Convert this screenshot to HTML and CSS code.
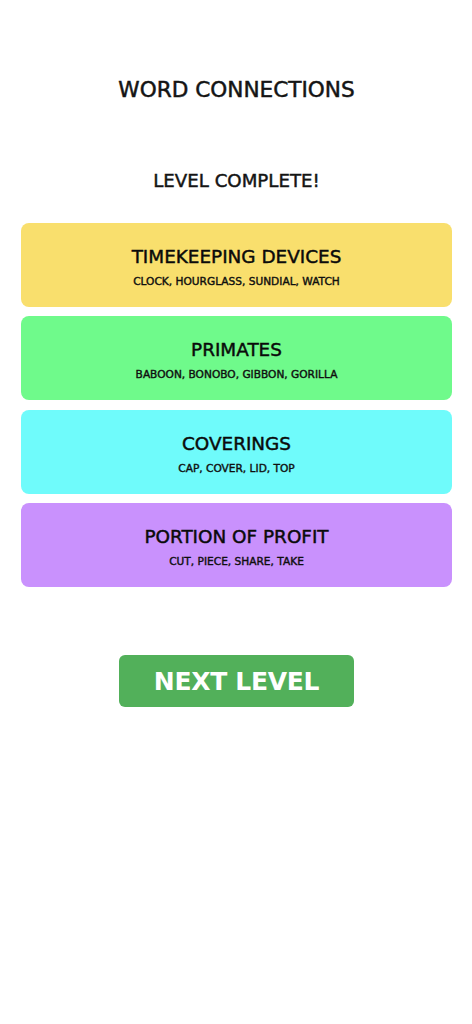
FILE: index.html
```html
<!DOCTYPE html>
<html>
<head>
<meta charset="utf-8">
<link rel="stylesheet" href="styles.css">
</head>
<body>
<main class="page">
  <h1 class="title">WORD CONNECTIONS</h1>
  <h2 class="status">LEVEL COMPLETE!</h2>
  <section class="groups">
    <div class="group yellow">
      <div class="group-name">TIMEKEEPING DEVICES</div>
      <div class="group-words">CLOCK, HOURGLASS, SUNDIAL, WATCH</div>
    </div>
    <div class="group green">
      <div class="group-name">PRIMATES</div>
      <div class="group-words">BABOON, BONOBO, GIBBON, GORILLA</div>
    </div>
    <div class="group cyan">
      <div class="group-name">COVERINGS</div>
      <div class="group-words">CAP, COVER, LID, TOP</div>
    </div>
    <div class="group purple">
      <div class="group-name">PORTION OF PROFIT</div>
      <div class="group-words">CUT, PIECE, SHARE, TAKE</div>
    </div>
  </section>
  <div class="actions">
    <button class="next">NEXT LEVEL</button>
  </div>
</main>
</body>
</html>
```
FILE: styles.css
```css
* { box-sizing: border-box; }
html, body { margin: 0; padding: 0; background: #fff; }
body {
  font-family: "DejaVu Sans", "Liberation Sans", sans-serif;
  color: #111;
}
.page {
  display: flex;
  flex-direction: column;
  align-items: center;
  padding: 77px 20px 0 21px;
}
.title {
  margin: 0;
  font-size: 21.6px;
  line-height: 26px;
  font-weight: normal;
  color: #141414;
  -webkit-text-stroke: 0.5px #141414;
}
.status {
  margin: 66px 0 0;
  font-size: 18.2px;
  line-height: 24px;
  font-weight: normal;
  color: #141414;
  -webkit-text-stroke: 0.45px #141414;
}
.groups {
  width: 100%;
  margin-top: 30px;
  display: flex;
  flex-direction: column;
  gap: 9.4px;
}
.group {
  height: 84px;
  border-radius: 8px;
  display: flex;
  flex-direction: column;
  align-items: center;
  justify-content: center;
  gap: 6px;
  padding-top: 4px;
}
.group-name {
  font-size: 18.4px;
  line-height: 22px;
  color: #0a0a0a;
  -webkit-text-stroke: 0.45px #0a0a0a;
}
.group-words {
  font-size: 10.6px;
  line-height: 14px;
  font-weight: normal;
  color: #0f0f0f;
  -webkit-text-stroke: 0.4px #0f0f0f;
}
.yellow { background: #f9df6d; }
.green { background: #6ffa8b; }
.cyan { background: #6ffbfb; }
.purple { background: #c991fd; }
.actions {
  margin-top: 68px;
  display: flex;
  justify-content: center;
}
.next {
  width: 235px;
  height: 52px;
  border: none;
  border-radius: 6px;
  background: #52b05a;
  color: #fff;
  font-family: "DejaVu Sans", "Liberation Sans", sans-serif;
  font-size: 25px;
  font-weight: bold;
  letter-spacing: -0.3px;
  padding: 0;
}
```
